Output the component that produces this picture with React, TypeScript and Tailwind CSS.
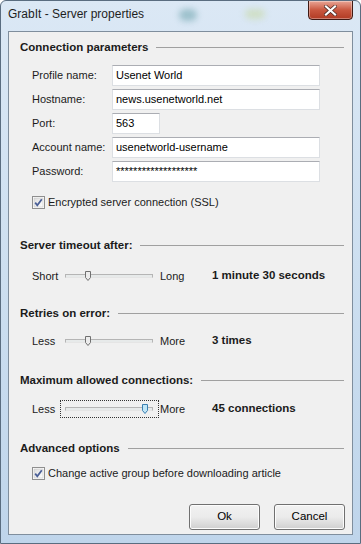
import React from 'react';

const font = { fontFamily: '"Liberation Sans", Arial, sans-serif' };

const Heading = ({ title, className = '' }: { title: string; className?: string }) => (
  <div className={`flex items-center h-4 shrink-0 pr-2 ${className}`}>
    <span className="font-bold text-[11.5px] leading-4 text-[#1b1b1b] whitespace-nowrap">{title}</span>
    <div className="flex-1 ml-2 h-px bg-[#a0a0a0]" />
  </div>
);

const Field = ({ label, value, width = 'w-[208px]' }: { label: string; value: string; width?: string }) => (
  <div className="flex items-center h-[21px] shrink-0">
    <span className="w-[92px] pl-3 text-[11px] text-[#1b1b1b] whitespace-nowrap">{label}</span>
    <div className={`${width} h-[21px] bg-white border border-[#dcdfe3] border-t-[#abadb3] flex items-center pl-[3px] text-[11px] text-black`}>
      {value}
    </div>
  </div>
);

const Check = ({ label, className = '' }: { label: string; className?: string }) => (
  <div className={`flex items-center h-[13px] shrink-0 pl-3 ${className}`}>
    <svg width="13" height="13" viewBox="0 0 13 13">
      <defs>
        <linearGradient id="cb" x1="0" y1="0" x2="1" y2="1">
          <stop offset="0" stopColor="#dcdcdc" />
          <stop offset="1" stopColor="#ffffff" />
        </linearGradient>
      </defs>
      <rect x="0.5" y="0.5" width="12" height="12" fill="#fff" stroke="#8f8f8f" />
      <rect x="2" y="2" width="9" height="9" fill="url(#cb)" stroke="#c6c6c6" strokeWidth="0.6" />
      <path d="M3.2 6.6 L5.3 9.2 L9.8 3.3" fill="none" stroke="#4a5f97" strokeWidth="1.8" />
    </svg>
    <span className="ml-[3px] text-[11px] text-[#1b1b1b]">{label}</span>
  </div>
);

const Slider = ({ left, right, value, pos, focused = false, className = '' }: { left: string; right: string; value: string; pos: number; focused?: boolean; className?: string }) => (
  <div className={`flex items-center h-[18px] shrink-0 pl-3 ${className}`}>
    <span className="w-[28px] text-[11px] text-[#1b1b1b]">{left}</span>
    <div className={`relative w-[99px] h-[18px] flex items-center ${focused ? 'outline-1 outline-dotted outline-[#333] -outline-offset-1' : ''}`}>
      <div className="ml-[5px] w-[88px] h-[4px] border border-[#b5b5b5] border-b-[#e5e5e5] bg-[#e7eaea]" />
      <svg className="absolute" style={{ left: pos, top: 4 }} width="6" height="10" viewBox="0 0 6 10">
        <path
          d="M0.5 0.5 H5.5 V6.5 L3 9.5 L0.5 6.5 Z"
          fill={focused ? '#bfe6f7' : '#ececec'}
          stroke={focused ? '#3c7fb1' : '#707070'}
        />
      </svg>
    </div>
    <span className="ml-[1px] w-[52px] text-[11px] text-[#1b1b1b]">{right}</span>
    <span className="font-bold text-[11.5px] text-[#1b1b1b]">{value}</span>
  </div>
);

const Button = ({ label }: { label: string }) => (
  <button className="w-[71px] h-[26px] rounded-[3px] border border-[#707070] bg-gradient-to-b from-[#f2f2f2] via-[#ebebeb] to-[#cfcfcf] text-[11.5px] text-black shadow-[inset_0_0_0_1px_#fcfcfc]">
    {label}
  </button>
);

export default function App() {
  return (
    <div
      style={font}
      className="w-[361px] h-[544px] overflow-hidden flex flex-col rounded-t-[6px] border border-[#5a6d80] bg-gradient-to-b from-[#dbe8f5] via-[#cddff0] to-[#bfd5eb]"
    >
      {/* title bar */}
      <div className="h-[30px] shrink-0 flex items-start relative">
        <span className="ml-[7px] mt-[4px] text-[12px] text-[#1e1e1e]">GrabIt - Server properties</span>
        <div className="absolute left-[178px] top-[8px] w-[18px] h-[12px] rounded-full bg-[#5f9aa3] opacity-50 blur-[3px]" />
        <div className="absolute left-[244px] top-[8px] w-[20px] h-[10px] rounded-full bg-[#c8d9a8] opacity-60 blur-[3px]" />
        <div className="absolute right-[7px] top-[-1px] w-[45px] h-[20px] rounded-b-[4px] border border-[#3f1a14] bg-gradient-to-b from-[#e8a596] via-[#c9573f] to-[#b13a23] flex items-center justify-center shadow-[inset_0_0_0_1px_rgba(255,255,255,0.35)]">
          <svg width="13" height="11" viewBox="0 0 13 11">
            <path d="M2 1.5 L11 9.5 M11 1.5 L2 9.5" stroke="#4a2a25" strokeWidth="3.6" strokeLinecap="square" />
            <path d="M2 1.5 L11 9.5 M11 1.5 L2 9.5" stroke="#ffffff" strokeWidth="2.2" strokeLinecap="square" />
          </svg>
        </div>
      </div>

      {/* client area */}
      <div className="mx-[7px] mb-[8px] flex-1 bg-[#f0f0f0] border border-[#7f8e9d] flex flex-col pl-[11px]">
        <Heading title="Connection parameters" className="mt-[7px]" />

        <div className="flex flex-col gap-[3px] mt-[10px] shrink-0">
          <Field label="Profile name:" value="Usenet World" />
          <Field label="Hostname:" value="news.usenetworld.net" />
          <Field label="Port:" value="563" width="w-[48px]" />
          <Field label="Account name:" value="usenetworld-username" />
          <Field label="Password:" value="*******************" />
        </div>

        <Check label="Encrypted server connection (SSL)" className="mt-[14px]" />

        <Heading title="Server timeout after:" className="mt-[28px]" />
        <Slider left="Short" right="Long" value="1 minute 30 seconds" pos={25} className="mt-[14px]" />

        <Heading title="Retries on error:" className="mt-[20px]" />
        <Slider left="Less" right="More" value="3 times" pos={25} className="mt-[11px]" />

        <Heading title="Maximum allowed connections:" className="mt-[22px]" />
        <Slider left="Less" right="More" value="45 connections" pos={82} focused className="mt-[12px]" />

        <Heading title="Advanced options" className="mt-[22px]" />
        <Check label="Change active group before downloading article" className="mt-[11px]" />

        <div className="flex justify-end gap-[14px] pr-[7px] mt-[24px] shrink-0">
          <Button label="Ok" />
          <Button label="Cancel" />
        </div>
      </div>
    </div>
  );
}
